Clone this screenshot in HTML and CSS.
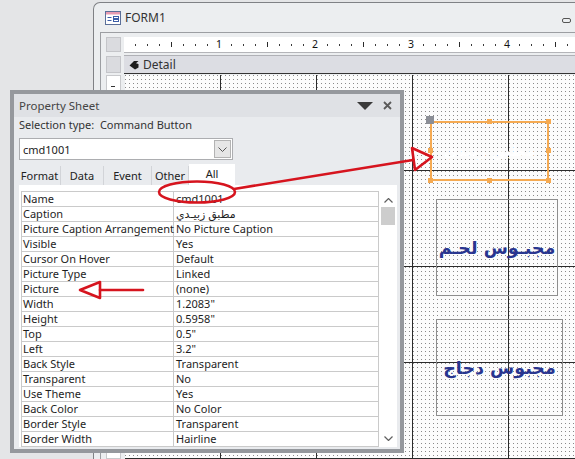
FILE: index.html
```html
<!DOCTYPE html>
<html>
<head>
<meta charset="utf-8">
<title>FORM1 - Property Sheet</title>
<link rel="stylesheet" href="styles.css">
</head>
<body>
<div class="window">
  <div class="titlebar">
    <svg class="form-icon" viewBox="0 0 16 14" width="16" height="14">
      <rect x="0.5" y="0.5" width="15" height="13" fill="#fff" stroke="#5b6f99"/>
      <rect x="1" y="1" width="14" height="2.5" fill="#e79bb2"/>
      <line x1="2.5" y1="6.5" x2="6.5" y2="6.5" stroke="#3d5ea8"/>
      <line x1="2.5" y1="9.5" x2="6.5" y2="9.5" stroke="#3d5ea8"/>
      <rect x="8.5" y="5.5" width="5" height="2" fill="none" stroke="#3d5ea8"/>
      <rect x="8.5" y="8.5" width="5" height="2" fill="none" stroke="#3d5ea8"/>
    </svg>
    <span class="form-title">FORM1</span>
    <span class="min-btn"></span>
  </div>
  <div class="designer">
    <div class="ruler-row">
      <div class="corner"></div>
      <div class="hruler"><span>1</span><span>2</span><span>3</span><span>4</span></div>
    </div>
    <div class="detail-row">
      <div class="corner"></div>
      <div class="section-bar">
        <svg class="sec-icon" viewBox="0 0 10 10" width="10" height="10"><path d="M0.5 5.5 L5 1 L9.5 1 L7 3.2 L9.5 4 L9.5 7.5 L6 9.5 Z" fill="#1e1e1e"/></svg>
        <span>Detail</span>
      </div>
    </div>
    <div class="body-row">
      <div class="vruler"></div>
      <div class="canvas">
        <div class="ctl selected">
          <span class="cap-white">مطبق زبيدي</span>
          <i class="h h-gray"></i>
          <i class="h h-tm"></i><i class="h h-tr"></i>
          <i class="h h-ml"></i><i class="h h-mr"></i>
          <i class="h h-bl"></i><i class="h h-bm"></i><i class="h h-br"></i>
        </div>
        <div class="ctl btn1"><span>مجبـوس لحـم</span></div>
        <div class="ctl btn2"><span>مجبوس دجاج</span></div>
      </div>
    </div>
  </div>
</div>

<div class="psheet">
  <div class="ps-title">
    <span>Property Sheet</span>
    <svg class="ps-tri" viewBox="0 0 16 8" width="16" height="8"><polygon points="0,0 16,0 8,8" fill="#3a3a3a"/></svg>
    <svg class="ps-x" viewBox="0 0 9 9" width="9" height="9"><path d="M1 1 L8 8 M8 1 L1 8" stroke="#5a5a5a" stroke-width="1.8"/></svg>
  </div>
  <div class="ps-body">
    <div class="seltype">Selection type:&nbsp; Command Button</div>
    <div class="combo">
      <span>cmd1001</span>
      <span class="dd"><svg viewBox="0 0 9 5" width="9" height="5"><path d="M0.5 0.5 L4.5 4.5 L8.5 0.5" fill="none" stroke="#555" stroke-width="1"/></svg></span>
    </div>
    <div class="tabs">
      <div class="tab t-format">Format</div>
      <div class="tab t-data">Data</div>
      <div class="tab t-event">Event</div>
      <div class="tab t-other">Other</div>
      <div class="tab t-all active">All</div>
    </div>
    <div class="panel">
      <div class="grid-wrap">
        <div class="props">
          <div class="n">Name</div><div class="v">cmd1001</div>
          <div class="n">Caption</div><div class="v">مطبق زبيـدي</div>
          <div class="n">Picture Caption Arrangement</div><div class="v">No Picture Caption</div>
          <div class="n">Visible</div><div class="v">Yes</div>
          <div class="n">Cursor On Hover</div><div class="v">Default</div>
          <div class="n">Picture Type</div><div class="v">Linked</div>
          <div class="n">Picture</div><div class="v">(none)</div>
          <div class="n">Width</div><div class="v">1.2083"</div>
          <div class="n">Height</div><div class="v">0.5958"</div>
          <div class="n">Top</div><div class="v">0.5"</div>
          <div class="n">Left</div><div class="v">3.2"</div>
          <div class="n">Back Style</div><div class="v">Transparent</div>
          <div class="n">Transparent</div><div class="v">No</div>
          <div class="n">Use Theme</div><div class="v">Yes</div>
          <div class="n">Back Color</div><div class="v">No Color</div>
          <div class="n">Border Style</div><div class="v">Transparent</div>
          <div class="n">Border Width</div><div class="v">Hairline</div>
        </div>
        <div class="vscroll">
          <svg class="arr" viewBox="0 0 9 5" width="9" height="5"><path d="M0.5 4.5 L4.5 0.5 L8.5 4.5" fill="none" stroke="#606060" stroke-width="1.2"/></svg>
          <div class="thumb"></div>
          <svg class="arr arr-down" viewBox="0 0 9 5" width="9" height="5"><path d="M0.5 0.5 L4.5 4.5 L8.5 0.5" fill="none" stroke="#606060" stroke-width="1.2"/></svg>
        </div>
      </div>
    </div>
  </div>
</div>

<svg class="annot" width="575" height="459" viewBox="0 0 575 459">
  <g fill="none" stroke="#d6141e" stroke-width="2.6" stroke-linejoin="round" stroke-linecap="round">
    <ellipse cx="197" cy="192" rx="38" ry="10.5"/>
    <path d="M234 189 L413 160"/>
    <polygon points="432,157 412,148 415,170"/>
    <path d="M143 290 L100 290"/>
    <polygon points="80,290 100,282 100,298"/>
  </g>
</svg>
</body>
</html>
```
FILE: styles.css
```css
html, body {
  margin: 0;
  padding: 0;
}
html {
  overflow: hidden;
}
body {
  width: 575px;
  height: 459px;
  overflow: hidden;
  position: relative;
  background: #e4e5e7;
  font-family: "Noto Sans", "DejaVu Sans", sans-serif;
  color: #222;
}

/* ---------- Form window ---------- */
.window {
  margin: 2px 0 0 93px;
  width: 482px;
  height: 457px;
  box-sizing: border-box;
  border: 1px solid #7f8185;
  border-right: none;
  border-bottom: none;
  border-radius: 7px 0 0 0;
  background: #eceef0;
  display: flex;
  flex-direction: column;
  overflow: hidden;
}
.titlebar {
  height: 29px;
  flex: none;
  display: flex;
  align-items: center;
  padding-left: 11px;
}
.form-icon {
  margin-right: 4px;
  margin-top: 1px;
}
.form-title {
  font-size: 12px;
  color: #333;
}
.min-btn {
  margin-left: auto;
  margin-right: 4px;
  margin-top: 5px;
  width: 7px;
  height: 3px;
  border: 1px solid #555;
  border-radius: 2px;
}

.designer {
  flex: 1;
  margin-left: 6px;
  border-left: 1px solid #9c9ea2;
  border-top: 1px solid #9c9ea2;
  display: flex;
  flex-direction: column;
  min-height: 0;
}
.corner {
  width: 13px;
  height: 13px;
  border: 1px solid #c4c5c9;
  background: #dadbdf;
  margin-right: 3px;
  flex: none;
}
.ruler-row {
  display: flex;
  flex: none;
  margin-top: 4px;
  padding-left: 5px;
  height: 16px;
}
.hruler {
  flex: 1;
  height: 16px;
  border-bottom: 1px solid #b4b5b9;
  background:
    linear-gradient(to right, transparent 47px, #2a2a2a 47px, #2a2a2a 48px, transparent 48px) 0 5px / 96px 5px repeat-x,
    linear-gradient(to right, transparent 11px, #3a3a3a 11px, #3a3a3a 12px, transparent 12px) 0 7px / 12px 2px repeat-x,
    #fff;
  display: flex;
  padding-left: 91px;
  box-sizing: border-box;
}
.hruler span {
  flex: none;
  width: 8px;
  margin-right: 88px;
  text-align: center;
  font-size: 10.5px;
  line-height: 15px;
  background: #fff;
  color: #111;
}

.detail-row {
  display: flex;
  flex: none;
  margin-top: 2px;
  padding-left: 5px;
  height: 19px;
}
.detail-row .corner {
  height: 15px;
  margin-top: 1px;
}
.section-bar {
  flex: 1;
  box-sizing: border-box;
  height: 19px;
  border-top: 1px solid #b0b1b6;
  border-bottom: 1px solid #333;
  background: #dcdde3;
  display: flex;
  align-items: center;
  padding-left: 5px;
  font-size: 12px;
  color: #333;
}
.sec-icon {
  margin-right: 4px;
}

.body-row {
  display: flex;
  flex: 1;
  min-height: 0;
  margin-top: 1px;
  padding-left: 5px;
}
.vruler {
  width: 15px;
  margin-right: 4px;
  flex: none;
  box-sizing: border-box;
  border: 1px solid #c8c9cc;
  background:
    linear-gradient(to bottom, transparent 10px, #333 10px, #333 11px, transparent 11px) 4px 0 / 4px 400px no-repeat,
    #fff;
}
.canvas {
  flex: 1;
  position: relative;
  background:
    linear-gradient(to bottom, transparent 95px, #2b2b2b 95px) 0 0 / 100% 96px,
    linear-gradient(to right, transparent 95px, #2b2b2b 95px) 0 0 / 96px 100%,
    conic-gradient(from 270deg at 1px 1px, #8a8a8a 90deg, transparent 0) 0 0 / 4px 4px,
    #fcfcfc;
}

/* controls on the design canvas */
.ctl {
  position: absolute;
  box-sizing: border-box;
  display: flex;
  align-items: center;
  justify-content: center;
}
.selected {
  left: 305px;
  top: 46px;
  width: 119px;
  height: 60px;
  border: 2px solid #f5aa52;
}
.cap-white {
  font-family: "DejaVu Sans", sans-serif;
  font-weight: bold;
  font-size: 15px;
  color: #ffffff;
}
.h {
  position: absolute;
  width: 5px;
  height: 5px;
  background: #f5aa52;
}
.h-gray { left: -6px; top: -7px; width: 8px; height: 8px; background: #8b8e96; }
.h-tm { left: 55px; top: -4px; }
.h-tr { right: -4px; top: -4px; }
.h-ml { left: -4px; top: 25px; }
.h-mr { right: -4px; top: 25px; }
.h-bl { left: -4px; bottom: -4px; }
.h-bm { left: 55px; bottom: -4px; }
.h-br { right: -4px; bottom: -4px; }

.btn1, .btn2 {
  border: 1px solid #8e8e8e;
  font-family: "DejaVu Sans", sans-serif;
  font-weight: bold;
  font-size: 17.5px;
  color: #28358f;
}
.btn1 {
  left: 311px;
  top: 124px;
  width: 122px;
  height: 97px;
}
.btn2 {
  left: 311px;
  top: 244px;
  width: 127px;
  height: 97px;
}

/* ---------- Property sheet ---------- */
.psheet {
  position: absolute;
  left: 10px;
  top: 90px;
  width: 394px;
  height: 363px;
  box-sizing: border-box;
  border: 4px solid #95989d;
  background: #e9ebee;
}
.ps-title {
  height: 23px;
  background: #dfe1e5;
  display: flex;
  align-items: center;
  padding-left: 5px;
  font-size: 11.5px;
  color: #444;
}
.ps-tri {
  margin-left: auto;
  margin-right: 10px;
}
.ps-x {
  margin-right: 8px;
}
.ps-body {
  padding-left: 5px;
}
.seltype {
  height: 16px;
  line-height: 16px;
  font-size: 11px;
  color: #333;
}
.combo {
  margin-top: 5px;
  width: 214px;
  height: 22px;
  box-sizing: border-box;
  border: 1px solid #acadb0;
  background: #fff;
  display: flex;
  align-items: center;
  padding-left: 3px;
  font-size: 11px;
}
.dd {
  margin-left: auto;
  margin-right: 1px;
  width: 17px;
  height: 18px;
  box-sizing: border-box;
  border: 1px solid #b3b3b3;
  background: #e6e6e6;
  display: flex;
  align-items: center;
  justify-content: center;
}
.tabs {
  margin-top: 4px;
  height: 21px;
  display: flex;
  align-items: flex-end;
}
.tab {
  box-sizing: border-box;
  height: 19px;
  line-height: 19px;
  font-size: 11px;
  text-align: center;
  color: #222;
  border-right: 1px solid #d2d4d8;
}
.t-format { width: 42px; }
.t-data { width: 43px; }
.t-event { width: 48px; }
.t-other { width: 37px; }
.t-all {
  width: 46px;
  border-right: none;
}
.tab.active {
  height: 21px;
  line-height: 19px;
  background: #fff;
}
.panel {
  width: 378px;
  height: 262px;
  background: #fff;
  padding: 6px 0 0 2px;
  box-sizing: border-box;
}
.grid-wrap {
  display: flex;
}
.props {
  width: 358px;
  box-sizing: border-box;
  border-top: 1px solid #cacaca;
  border-left: 1px solid #cacaca;
  border-right: 1px solid #cacaca;
  display: grid;
  grid-template-columns: 152px 1fr;
  font-size: 11px;
  color: #1e1e1e;
}
.props .n, .props .v {
  height: 15px;
  line-height: 14px;
  box-sizing: border-box;
  border-bottom: 1px solid #cacaca;
  white-space: nowrap;
}
.props .n {
  border-right: 1px solid #cacaca;
  padding-left: 1px;
}
.props .v {
  padding-left: 2px;
}
.vscroll {
  width: 18px;
  height: 256px;
  display: flex;
  flex-direction: column;
  align-items: center;
}
.vscroll .arr {
  margin-top: 7px;
}
.thumb {
  margin-top: 4px;
  width: 14px;
  height: 18px;
  background: #cdcdcd;
}
.arr-down {
  margin-top: auto !important;
  margin-bottom: 6px;
}

/* ---------- Annotations ---------- */
.annot {
  position: absolute;
  left: 0;
  top: 0;
  pointer-events: none;
}
```
